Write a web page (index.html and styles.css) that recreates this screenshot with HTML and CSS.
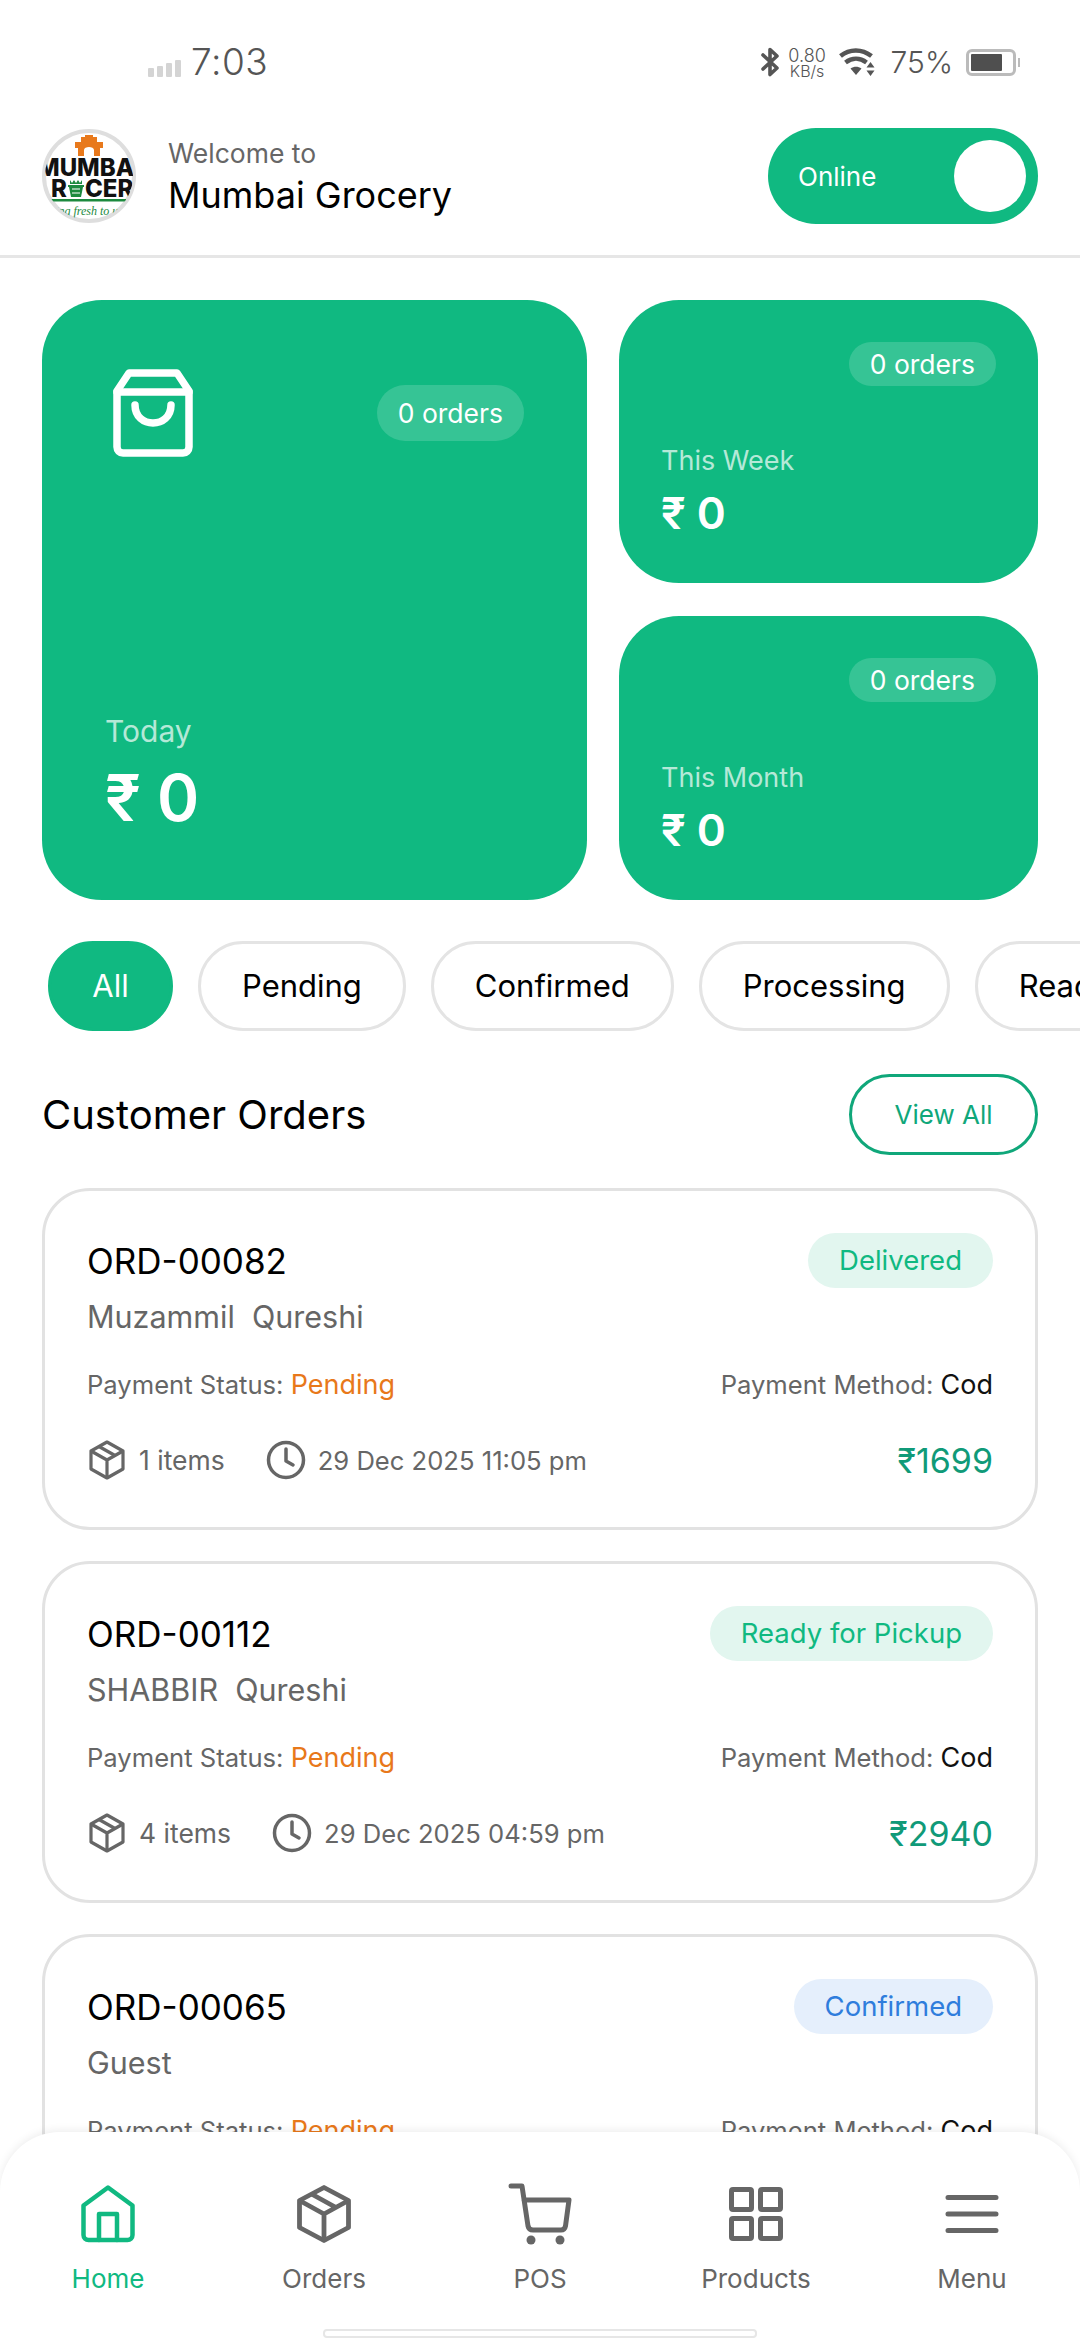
FILE: index.html
```html
<!DOCTYPE html>
<html lang="en">
<head>
    <meta charset="UTF-8">
    <meta name="viewport" content="width=device-width, initial-scale=1.0">
    <title>Mumbai Grocery</title>
    <link rel="stylesheet" href="styles.css">
</head>
<body>
<div class="screen">

    <!-- Status bar -->
    <div class="status-bar">
        <div class="status-left">
            <div class="signal"><i></i><i></i><i></i><i></i></div>
            <span class="clock">7:03</span>
        </div>
        <div class="status-right">
            <svg class="bt" width="18" height="30" viewBox="0 0 18 30" fill="none" stroke="#555" stroke-width="3.600" stroke-linecap="round" stroke-linejoin="round"><path d="M2 8l14 13-7 6.500V2.500L16 9 2 22"/></svg>
            <div class="speed"><span>0.80</span><span class="speed-unit">KB/s</span></div>
            <svg class="wifi" width="36" height="28" viewBox="0 0 36 28" fill="none"><path d="M1.500 8C10.500 .5 23 .5 32.500 8" stroke="#555" stroke-width="4.500"/><path d="M6.500 14.500C13 9.500 21 9.500 27.500 14.500" stroke="#555" stroke-width="4.500"/><path d="M17 27l-5.500-6.500c3.500-2.500 7.500-2.500 11 0z" fill="#555"/><path d="M31.500 14l4 5.500h-8zM31.500 28l4-5.500h-8z" fill="#555"/></svg>
            <span class="battery-text">75%</span>
            <div class="battery"><div class="battery-fill"></div></div>
        </div>
    </div>

    <!-- Store header -->
    <header class="top-bar">
        <div class="store">
            <svg class="logo" width="94" height="96" viewBox="0 0 94 96">
                <defs><clipPath id="logoClip"><circle cx="47" cy="48" r="44"/></clipPath></defs>
                <circle cx="47" cy="48" r="45" fill="#fff" stroke="#dedede" stroke-width="4"/>
                <g clip-path="url(#logoClip)">
                    <path d="M33 14h6V9h4V7h8v2h4v5h6v6h-3v8h-6v-6c0-4-10-4-10 0v6h-6v-8h-3z" fill="#e8791c"/>
                    <text class="logo-word" x="47" y="48" text-anchor="middle">MUMBAI</text>
                    <text class="logo-word" x="17" y="69" text-anchor="middle">R</text>
                    <path d="M28 52l2 3 2-3 2 3 2-3 2 3 2-3v4H28zM26 57h16v2h-1l-2 10H29l-2-10h-1z" fill="#1c8a3e"/>
                    <path d="M30 61h8M30 65h8" stroke="#fff" stroke-width="1.200"/>
                    <text class="logo-word" x="43" y="69">CER</text>
                    <rect x="8" y="71" width="76" height="2.500" fill="#1c8a3e"/>
                    <text class="logo-tag" x="47" y="87" text-anchor="middle">ing fresh to us</text>
                </g>
            </svg>
            <div class="store-text">
                <span class="welcome">Welcome to</span>
                <span class="store-name">Mumbai Grocery</span>
            </div>
        </div>
        <div class="toggle">
            <span>Online</span>
            <div class="knob"></div>
        </div>
    </header>

    <!-- Sales summary -->
    <section class="stats">
        <div class="stat stat-big">
            <div class="stat-big-top">
                <svg width="80" height="88" viewBox="0 0 80 88" fill="none" stroke="#fff" stroke-width="7.500" stroke-linecap="round" stroke-linejoin="round"><path d="M16 4h48l12 18v56a6 6 0 0 1-6 6H10a6 6 0 0 1-6-6V22z"/><path d="M4 23h72"/><path d="M22 36c0 24 36 24 36 0"/></svg>
                <span class="order-pill">0 orders</span>
            </div>
            <div class="stat-foot">
                <span class="stat-label">Today</span>
                <span class="stat-value">₹ 0</span>
            </div>
        </div>
        <div class="stat stat-small">
            <span class="order-pill">0 orders</span>
            <div class="stat-foot">
                <span class="stat-label">This Week</span>
                <span class="stat-value">₹ 0</span>
            </div>
        </div>
        <div class="stat stat-small">
            <span class="order-pill">0 orders</span>
            <div class="stat-foot">
                <span class="stat-label">This Month</span>
                <span class="stat-value">₹ 0</span>
            </div>
        </div>
    </section>

    <!-- Status filter -->
    <div class="chips">
        <span class="chip chip-active">All</span>
        <span class="chip">Pending</span>
        <span class="chip">Confirmed</span>
        <span class="chip">Processing</span>
        <span class="chip">Ready for Pickup</span>
    </div>

    <div class="section-head">
        <h2>Customer Orders</h2>
        <span class="view-all">View All</span>
    </div>

    <!-- Orders -->
    <section class="orders">
        <article class="order">
            <div class="row">
                <span class="order-id">ORD-00082</span>
                <span class="badge badge-green">Delivered</span>
            </div>
            <div class="customer">Muzammil&nbsp; Qureshi</div>
            <div class="row pay-row">
                <span>Payment Status: <b class="pending">Pending</b></span>
                <span>Payment Method: <b class="cod">Cod</b></span>
            </div>
            <div class="row meta-row">
                <div class="meta">
                    <svg class="box" width="36" height="40" viewBox="0 0 36 40" fill="none" stroke="#666" stroke-width="3.200" stroke-linejoin="round"><path d="M18 2l16 9v18l-16 9-16-9V11z"/><path d="M2 11l16 9 16-9M18 20v18M10 6.500l16 9"/></svg>
                    <span>1 items</span>
                    <svg class="clock-icon" width="40" height="40" viewBox="0 0 40 40" fill="none" stroke="#666" stroke-width="3.500" stroke-linecap="round" stroke-linejoin="round"><circle cx="20" cy="20" r="17.500"/><path d="M20 9v12l7 4"/></svg>
                    <span class="meta-date">29 Dec 2025 11:05 pm</span>
                </div>
                <span class="price">₹1699</span>
            </div>
        </article>

        <article class="order">
            <div class="row">
                <span class="order-id">ORD-00112</span>
                <span class="badge badge-green">Ready for Pickup</span>
            </div>
            <div class="customer">SHABBIR&nbsp; Qureshi</div>
            <div class="row pay-row">
                <span>Payment Status: <b class="pending">Pending</b></span>
                <span>Payment Method: <b class="cod">Cod</b></span>
            </div>
            <div class="row meta-row">
                <div class="meta">
                    <svg class="box" width="36" height="40" viewBox="0 0 36 40" fill="none" stroke="#666" stroke-width="3.200" stroke-linejoin="round"><path d="M18 2l16 9v18l-16 9-16-9V11z"/><path d="M2 11l16 9 16-9M18 20v18M10 6.500l16 9"/></svg>
                    <span>4 items</span>
                    <svg class="clock-icon" width="40" height="40" viewBox="0 0 40 40" fill="none" stroke="#666" stroke-width="3.500" stroke-linecap="round" stroke-linejoin="round"><circle cx="20" cy="20" r="17.500"/><path d="M20 9v12l7 4"/></svg>
                    <span class="meta-date">29 Dec 2025 04:59 pm</span>
                </div>
                <span class="price">₹2940</span>
            </div>
        </article>

        <article class="order">
            <div class="row">
                <span class="order-id">ORD-00065</span>
                <span class="badge badge-blue">Confirmed</span>
            </div>
            <div class="customer">Guest</div>
            <div class="row pay-row">
                <span>Payment Status: <b class="pending">Pending</b></span>
                <span>Payment Method: <b class="cod">Cod</b></span>
            </div>
        </article>
    </section>

    <!-- Bottom navigation -->
    <nav class="tabbar">
        <a class="tab tab-active">
            <svg width="54" height="58" viewBox="0 0 54 58" fill="none" stroke="#10b981" stroke-width="4.500" stroke-linecap="round" stroke-linejoin="round"><path d="M27 2.500L51.500 20.500V50a5 5 0 0 1-5 5H7.500a5 5 0 0 1-5-5V20.500z"/><path d="M18 55V29h18v26"/></svg>
            <span>Home</span>
        </a>
        <a class="tab">
            <svg width="54" height="58" viewBox="0 0 54 58" fill="none" stroke="#666" stroke-width="4.800" stroke-linejoin="round"><path d="M27 2.500L51.500 15.500V42.500L27 55.500 2.500 42.500V15.500z"/><path d="M2.500 15.500L27 29l24.500-13.500M27 29v26.500M14.500 9L39 22.500"/></svg>
            <span>Orders</span>
        </a>
        <a class="tab">
            <svg width="64" height="62" viewBox="0 0 64 62" fill="none" stroke="#666" stroke-width="5" stroke-linecap="round" stroke-linejoin="round"><path d="M3 3h11l6 40c.5 2.500 2 4 5 4h28c2.500 0 4-1.500 4.500-4L61 17H16"/><circle cx="23" cy="57" r="4.500" fill="#666" stroke="none"/><circle cx="52" cy="57" r="4.500" fill="#666" stroke="none"/></svg>
            <span>POS</span>
        </a>
        <a class="tab">
            <svg width="54" height="54" viewBox="0 0 54 54" fill="none" stroke="#666" stroke-width="5" stroke-linejoin="round"><rect x="2.500" y="2.500" width="20" height="20" rx="1.500"/><rect x="31.500" y="2.500" width="20" height="20" rx="1.500"/><rect x="2.500" y="31.500" width="20" height="20" rx="1.500"/><rect x="31.500" y="31.500" width="20" height="20" rx="1.500"/></svg>
            <span>Products</span>
        </a>
        <a class="tab">
            <svg width="54" height="40" viewBox="0 0 54 40" fill="none" stroke="#666" stroke-width="5" stroke-linecap="round"><path d="M3 3.500h48M3 20h48M3 36.500h48"/></svg>
            <span>Menu</span>
        </a>
    </nav>
    <div class="home-bar"></div>

</div>
</body>
</html>
```

FILE: styles.css
```css
/* Global Styles */
* {
    box-sizing: border-box;
}

body {
    margin: 0;
    padding: 0;
    background-color: #fff;
    font-family: Inter, "Noto Sans", sans-serif;
    color: #000;
}

.screen {
    position: relative;
    width: 1080px;
    height: 2340px;
    overflow: hidden;
}

.row {
    display: flex;
    justify-content: space-between;
    align-items: center;
}

/* Status bar */
.status-bar {
    height: 126px;
    padding: 40px 64px 0 148px;
    display: flex;
    justify-content: space-between;
    align-items: flex-start;
    color: #555;
}

.status-left {
    display: flex;
    align-items: flex-end;
    gap: 10px;
}

.signal {
    display: flex;
    align-items: flex-end;
    gap: 3px;
    height: 18px;
    margin-bottom: 7px;
}

.signal i {
    display: block;
    width: 6px;
    background-color: #d4d4d4;
    border-radius: 1px;
}

.signal i:nth-child(1) { height: 9px; }
.signal i:nth-child(2) { height: 11px; }
.signal i:nth-child(3) { height: 14px; }
.signal i:nth-child(4) { height: 17px; }

.clock {
    font-size: 37px;
    font-weight: 300;
    line-height: 44px;
    letter-spacing: 0.5px;
}

.status-right {
    display: flex;
    align-items: center;
    height: 44px;
}

.bt {
    margin-right: 10px;
}

.speed {
    display: flex;
    flex-direction: column;
    align-items: center;
    width: 37px;
    font-size: 18px;
    line-height: 17px;
    font-weight: 300;
    margin-right: 13px;
}

.speed-unit {
    font-size: 16px;
    line-height: 14px;
}

.battery-text {
    font-size: 30px;
    font-weight: 300;
    margin: 0 13px 0 16px;
}

.battery {
    position: relative;
    width: 50px;
    height: 27px;
    border: 3px solid #bbb;
    border-radius: 6px;
    padding: 2px;
}

.battery::after {
    content: "";
    position: absolute;
    right: -7px;
    top: 6px;
    width: 2px;
    height: 9px;
    background-color: #bbb;
}

.battery-fill {
    width: 78%;
    height: 100%;
    background-color: #4f4f4f;
    border-radius: 1px;
}

/* Store header */
.top-bar {
    height: 132px;
    padding: 2px 42px 0;
    display: flex;
    justify-content: space-between;
    align-items: flex-start;
    border-bottom: 3px solid #e6e6e6;
}

.store {
    display: flex;
    align-items: center;
    gap: 32px;
    height: 96px;
}

.logo-word {
    font-family: Inter, sans-serif;
    font-size: 24px;
    font-weight: 800;
    fill: #111;
}

.logo-tag {
    font-family: "Liberation Serif", serif;
    font-size: 12px;
    font-style: italic;
    fill: #1c8a3e;
}

.store-text {
    display: flex;
    flex-direction: column;
    gap: 5px;
}

.welcome {
    font-size: 26.500px;
    line-height: 32px;
    color: #666;
}

.store-name {
    font-size: 36px;
    line-height: 42px;
    font-weight: 400;
}

.toggle {
    width: 270px;
    height: 96px;
    padding: 0 12px 0 30px;
    background-color: #10b981;
    border-radius: 48px;
    display: flex;
    justify-content: space-between;
    align-items: center;
    color: #fff;
    font-size: 26px;
}

.knob {
    width: 72px;
    height: 72px;
    background-color: #fff;
    border-radius: 50%;
}

/* Sales summary */
.stats {
    margin: 42px 42px 0;
    display: grid;
    grid-template-columns: 545px 419px;
    grid-template-rows: 283px 284px;
    column-gap: 32px;
    row-gap: 33px;
}

.stat {
    background-color: #10b981;
    border-radius: 60px;
    color: #fff;
    display: flex;
    flex-direction: column;
    justify-content: space-between;
}

.stat-big {
    grid-row: 1 / 3;
    padding: 69px 63px 63px;
}

.stat-big-top {
    display: flex;
    justify-content: space-between;
    align-items: flex-start;
    padding-left: 8px;
}

.stat-small {
    padding: 42px 42px 43px;
}

.stat-small .order-pill {
    align-self: flex-end;
}

.order-pill {
    height: 44px;
    padding: 0 21px;
    background-color: rgba(255, 255, 255, 0.16);
    border-radius: 22px;
    font-size: 26.500px;
    line-height: 44px;
}

.stat-big-top .order-pill {
    margin-top: 16px;
    height: 56px;
    line-height: 56px;
    border-radius: 28px;
}

.stat-foot {
    display: flex;
    flex-direction: column;
    gap: 8px;
}

.stat-label {
    font-size: 27px;
    line-height: 34px;
    color: rgba(255, 255, 255, 0.7);
}

.stat-value {
    font-size: 44px;
    line-height: 54px;
    font-weight: 600;
}

.stat-big .stat-foot {
    gap: 11px;
}

.stat-big .stat-label {
    font-size: 30px;
}

.stat-big .stat-value {
    font-size: 64px;
    line-height: 78px;
}

/* Status filter */
.chips {
    margin-top: 41px;
    padding-left: 48px;
    display: flex;
    gap: 25px;
    white-space: nowrap;
}

.chip {
    flex: none;
    height: 90px;
    padding: 0 41px;
    border: 3px solid #e4e4e4;
    border-radius: 45px;
    font-size: 31px;
    line-height: 84px;
}

.chip-active {
    width: 125px;
    padding: 0;
    text-align: center;
    background-color: #10b981;
    border-color: #10b981;
    color: #fff;
}

.section-head {
    margin: 43px 42px 0;
    display: flex;
    justify-content: space-between;
    align-items: center;
}

.section-head h2 {
    margin: 0;
    font-size: 40px;
    font-weight: 400;
}

.view-all {
    width: 189px;
    height: 81px;
    border: 3px solid #10a77a;
    border-radius: 41px;
    text-align: center;
    font-size: 26px;
    line-height: 75px;
    color: #10a77a;
}

/* Orders */
.orders {
    margin: 33px 42px 0;
    display: flex;
    flex-direction: column;
    gap: 31px;
}

.order {
    height: 342px;
    flex: none;
    padding: 42px 42px 0;
    border: 3px solid #e2e2e2;
    border-radius: 48px;
}

.order-id {
    font-size: 35px;
}

.badge {
    height: 55px;
    padding: 0 31px;
    border-radius: 28px;
    font-size: 27.500px;
    line-height: 55px;
}

.badge-green {
    background-color: #e2f6ef;
    color: #10b981;
}

.badge-blue {
    background-color: #e5effc;
    color: #2f7ddc;
}

.customer {
    margin-top: 9px;
    font-size: 30.500px;
    line-height: 40px;
    color: #666;
}

.pay-row {
    margin-top: 29px;
    font-size: 25.600px;
    line-height: 38px;
    color: #666;
}

.pay-row b {
    font-size: 27px;
    font-weight: 400;
}

.pending {
    color: #e8781a;
}

.cod {
    color: #111;
}

.meta-row {
    margin-top: 35px;
    height: 42px;
}

.meta {
    display: flex;
    align-items: center;
    font-size: 26.500px;
    color: #666;
}

.meta-date {
    font-size: 25.600px;
}

.box {
    margin: 0 14px 0 2px;
}

.clock-icon {
    margin: 0 12px 0 41px;
}

.price {
    font-size: 34px;
    font-weight: 400;
    color: #109a78;
}

/* Bottom navigation */
.tabbar {
    position: absolute;
    left: 0;
    right: 0;
    bottom: 0;
    height: 208px;
    padding: 51px 0 0;
    background-color: #fff;
    border-radius: 60px 60px 0 0;
    box-shadow: 0 -2px 8px rgba(0, 0, 0, 0.07);
    display: grid;
    grid-template-columns: 216px 216px 216px 216px 216px;
}

.tab {
    display: flex;
    flex-direction: column;
    align-items: center;
    font-size: 26px;
    color: #666;
}

.tab svg {
    height: 62px;
    margin-bottom: 18px;
}

.tab-active {
    color: #10b981;
}

.home-bar {
    position: absolute;
    left: 323px;
    bottom: 2px;
    width: 434px;
    height: 9px;
    background-color: #fff;
    border: 2px solid #e6e6e6;
    border-radius: 4px;
}
```
